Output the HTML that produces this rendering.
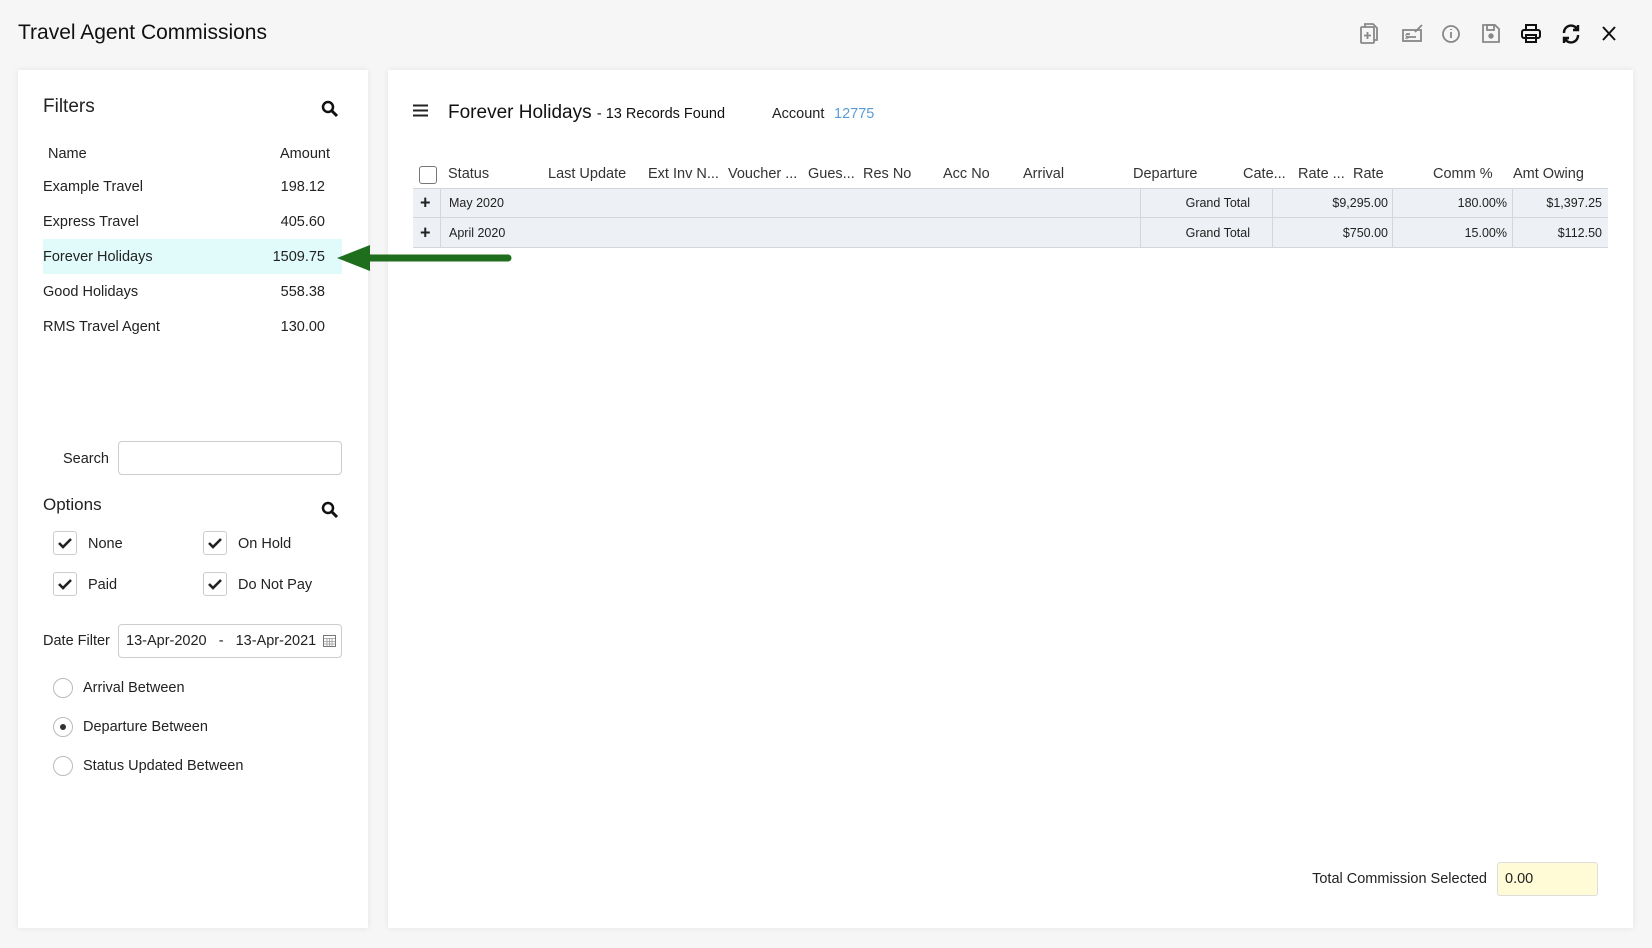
<!DOCTYPE html>
<html><head><meta charset="utf-8">
<style>
*{margin:0;padding:0;box-sizing:border-box}
body{width:1652px;height:948px;background:#f6f6f6;font-family:"Liberation Sans",sans-serif;color:#222;position:relative;overflow:hidden}
.a{position:absolute;white-space:nowrap}
.panel{position:absolute;background:#fff;box-shadow:0 0 6px rgba(0,0,0,.08)}
.t{font-size:14.5px;transform:translateY(-50%)}
.cb{position:absolute;width:24px;height:24px;border:1px solid #ccc;border-radius:3px;background:#fff}
.cb svg{position:absolute;left:4px;top:5px}
.rd{position:absolute;width:20px;height:20px;border:1px solid #bbb;border-radius:50%;background:#fff}
.h{font-size:14.5px;color:#333;transform:translateY(-50%)}
.row{position:absolute;left:413px;width:1195px;height:30px;background:#edf0f4;border-bottom:1px solid #d3d6da}
.row .v{position:absolute;top:0;height:100%;border-left:1px solid #d3d6da}
.row span{position:absolute;top:50%;transform:translateY(-50%);font-size:12.5px;color:#222}
</style></head><body>
<div class="a" style="left:18px;top:21px;font-size:21px;color:#111">Travel Agent Commissions</div>

<svg class="a" style="left:1358px;top:22px" width="262" height="24" viewBox="0 0 262 24" fill="none" stroke-width="1.8">
<g stroke="#888"><rect x="3" y="5" width="13" height="16" rx="1"/><path d="M7 5V2h8l4 4v12h-3"/><path d="M9.5 10v7M6 13.5h7"/></g>
<g stroke="#888" transform="translate(44,0)"><rect x="1" y="8" width="18" height="11"/><path d="M4 12h4M4 15h10M20 3l-7 7"/><text x="3" y="17" font-size="7" fill="#888" stroke="none">$</text></g>
<g stroke="#888" transform="translate(84,0)"><circle cx="9" cy="12" r="8"/><path d="M9 10v6M9 7v1"/></g>
<g stroke="#888" transform="translate(123,0)"><path d="M2 3h12l4 4v13H2z"/><rect x="6" y="3" width="7" height="5"/><circle cx="10" cy="14" r="1.8" fill="#888"/></g>
<g stroke="#111" stroke-width="2" transform="translate(163,0)"><path d="M5 8V3h10v5"/><rect x="1" y="8" width="18" height="8" rx="2"/><rect x="5" y="13" width="10" height="7"/></g>
<g stroke="#111" stroke-width="2.4" transform="translate(203,0)"><path d="M3 11a7 7 0 0 1 13-4M17 13a7 7 0 0 1-13 4"/><path d="M17 3v5h-5M3 21v-5h5" fill="#111"/></g>
<g stroke="#111" stroke-width="2" transform="translate(242,0)"><path d="M3 5l12 13M15 5L3 18"/></g>
</svg>

<div class="panel" style="left:18px;top:70px;width:350px;height:858px"></div>
<div class="panel" style="left:388px;top:70px;width:1245px;height:858px"></div>

<div class="a t" style="left:43px;top:107px;font-size:19px">Filters</div>
<svg class="a" style="left:321px;top:100px" width="18" height="18" viewBox="0 0 18 18"><circle cx="7" cy="7" r="5" fill="none" stroke="#111" stroke-width="2.5"/><path d="M11 11l5 5" stroke="#111" stroke-width="3"/></svg>
<div class="a t" style="left:48px;top:154px">Name</div>
<div class="a t" style="left:280px;top:154px">Amount</div>
<div class="a" style="left:43px;top:239px;width:299px;height:35px;background:#e1fbfb"></div>
<div class="a t" style="left:43px;top:187px">Example Travel</div><div class="a t" style="right:1327px;top:187px">198.12</div>
<div class="a t" style="left:43px;top:222px">Express Travel</div><div class="a t" style="right:1327px;top:222px">405.60</div>
<div class="a t" style="left:43px;top:257px">Forever Holidays</div><div class="a t" style="right:1327px;top:257px">1509.75</div>
<div class="a t" style="left:43px;top:292px">Good Holidays</div><div class="a t" style="right:1327px;top:292px">558.38</div>
<div class="a t" style="left:43px;top:327px">RMS Travel Agent</div><div class="a t" style="right:1327px;top:327px">130.00</div>
<svg class="a" style="left:334px;top:243px;z-index:5" width="180" height="32" viewBox="0 0 180 32"><path d="M36 15H174" stroke="#1e6e1e" stroke-width="7" stroke-linecap="round"/><path d="M3 15L36 2V28z" fill="#1e6e1e"/></svg>

<div class="a t" style="left:63px;top:459px">Search</div>
<div class="a" style="left:118px;top:441px;width:224px;height:34px;border:1px solid #ccc;border-radius:4px"></div>
<div class="a t" style="left:43px;top:505px;font-size:17px">Options</div>
<svg class="a" style="left:321px;top:501px" width="18" height="18" viewBox="0 0 18 18"><circle cx="7" cy="7" r="5" fill="none" stroke="#111" stroke-width="2.5"/><path d="M11 11l5 5" stroke="#111" stroke-width="3"/></svg>
<div class="cb" style="left:53px;top:531px"><svg width="14" height="12"><path d="M1 6l4 4 8-8" fill="none" stroke="#222" stroke-width="2.6"/></svg></div>
<div class="a t" style="left:88px;top:544px">None</div>
<div class="cb" style="left:203px;top:531px"><svg width="14" height="12"><path d="M1 6l4 4 8-8" fill="none" stroke="#222" stroke-width="2.6"/></svg></div>
<div class="a t" style="left:238px;top:544px">On Hold</div>
<div class="cb" style="left:53px;top:572px"><svg width="14" height="12"><path d="M1 6l4 4 8-8" fill="none" stroke="#222" stroke-width="2.6"/></svg></div>
<div class="a t" style="left:88px;top:585px">Paid</div>
<div class="cb" style="left:203px;top:572px"><svg width="14" height="12"><path d="M1 6l4 4 8-8" fill="none" stroke="#222" stroke-width="2.6"/></svg></div>
<div class="a t" style="left:238px;top:585px">Do Not Pay</div>
<div class="a t" style="left:43px;top:641px">Date Filter</div>
<div class="a" style="left:118px;top:624px;width:224px;height:34px;border:1px solid #ccc;border-radius:4px"></div>
<div class="a t" style="left:126px;top:641px">13-Apr-2020 &nbsp;&nbsp;- &nbsp;&nbsp;13-Apr-2021</div>
<svg class="a" style="left:323px;top:634px" width="13" height="13" viewBox="0 0 13 13"><rect x=".5" y="1.5" width="12" height="11" fill="none" stroke="#777"/><path d="M1 4.5h11M1 7.5h11M1 10h11M4 4v8M6.5 4v8M9 4v8" stroke="#999" stroke-width=".8"/></svg>
<div class="rd" style="left:53px;top:678px"></div><div class="a t" style="left:83px;top:688px">Arrival Between</div>
<div class="rd" style="left:53px;top:717px"><div style="position:absolute;left:6px;top:6px;width:6px;height:6px;border-radius:50%;background:#333"></div></div><div class="a t" style="left:83px;top:727px">Departure Between</div>
<div class="rd" style="left:53px;top:756px"></div><div class="a t" style="left:83px;top:766px">Status Updated Between</div>

<svg class="a" style="left:413px;top:104px" width="15" height="13"><path d="M0 1.5h15M0 6.5h15M0 11.5h15" stroke="#222" stroke-width="2"/></svg>
<div class="a t" style="left:448px;top:113px;font-size:19px;color:#111">Forever Holidays <span style="font-size:14.5px">- 13 Records Found</span></div>
<div class="a t" style="left:772px;top:114px">Account</div>
<div class="a t" style="left:834px;top:114px;color:#5b9bd5">12775</div>

<div class="a" style="left:419px;top:166px;width:18px;height:18px;border:1px solid #777;border-radius:3px"></div>
<div class="a h" style="left:448px;top:174px">Status</div>
<div class="a h" style="left:548px;top:174px">Last Update</div>
<div class="a h" style="left:648px;top:174px">Ext Inv N...</div>
<div class="a h" style="left:728px;top:174px">Voucher ...</div>
<div class="a h" style="left:808px;top:174px">Gues...</div>
<div class="a h" style="left:863px;top:174px">Res No</div>
<div class="a h" style="left:943px;top:174px">Acc No</div>
<div class="a h" style="left:1023px;top:174px">Arrival</div>
<div class="a h" style="left:1133px;top:174px">Departure</div>
<div class="a h" style="left:1243px;top:174px">Cate...</div>
<div class="a h" style="left:1298px;top:174px">Rate ...</div>
<div class="a h" style="left:1353px;top:174px">Rate</div>
<div class="a h" style="left:1433px;top:174px">Comm %</div>
<div class="a h" style="left:1513px;top:174px">Amt Owing</div>

<div class="row" style="top:188px;border-top:1px solid #d3d6da">
<span style="left:7px;font-size:18px;font-weight:bold">+</span>
<div class="v" style="left:27px"></div><span style="left:36px">May 2020</span>
<div class="v" style="left:727px"></div><span style="right:358px">Grand Total</span>
<div class="v" style="left:859px"></div><span style="right:220px">$9,295.00</span>
<div class="v" style="left:979px"></div><span style="right:101px">180.00%</span>
<div class="v" style="left:1099px"></div><span style="right:6px">$1,397.25</span>
</div>
<div class="row" style="top:218px">
<span style="left:7px;font-size:18px;font-weight:bold">+</span>
<div class="v" style="left:27px"></div><span style="left:36px">April 2020</span>
<div class="v" style="left:727px"></div><span style="right:358px">Grand Total</span>
<div class="v" style="left:859px"></div><span style="right:220px">$750.00</span>
<div class="v" style="left:979px"></div><span style="right:101px">15.00%</span>
<div class="v" style="left:1099px"></div><span style="right:6px">$112.50</span>
</div>

<div class="a t" style="right:165px;top:879px">Total Commission Selected</div>
<div class="a" style="left:1497px;top:862px;width:101px;height:34px;background:#fffbd6;border:1px solid #ddd;border-radius:3px"></div>
<div class="a t" style="left:1505px;top:879px">0.00</div>
</body></html>
